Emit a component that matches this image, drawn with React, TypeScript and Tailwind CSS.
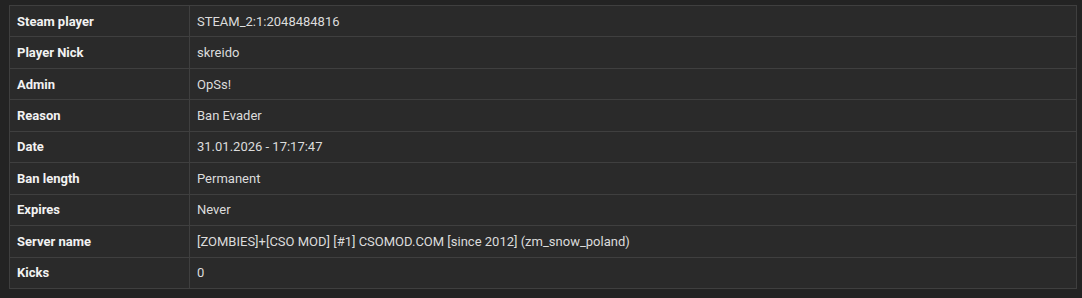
import React from 'react';

// Ban details table rows
const rows: { label: string; value: string }[] = [
  { label: 'Steam player', value: 'STEAM_2:1:2048484816' },
  { label: 'Player Nick', value: 'skreido' },
  { label: 'Admin', value: 'OpSs!' },
  { label: 'Reason', value: 'Ban Evader' },
  { label: 'Date', value: '31.01.2026 - 17:17:47' },
  { label: 'Ban length', value: 'Permanent' },
  { label: 'Expires', value: 'Never' },
  { label: 'Server name', value: '[ZOMBIES]+[CSO MOD] [#1] CSOMOD.COM [since 2012] (zm_snow_poland)' },
  { label: 'Kicks', value: '0' },
];

export default function App() {
  return (
    <div className="w-[1082px] h-[298px] bg-[#232323] pt-[5px] pl-[9px] font-['Roboto',_'Liberation_Sans',_sans-serif] text-[13px]">
      <table className="w-[1068px] border-collapse bg-[#2a2a2a] border border-[#3f3f3f]">
        <tbody>
          {rows.map((row) => (
            <tr key={row.label} className="h-[31.45px]">
              <td className="w-[180px] border border-[#3f3f3f] px-[7px] font-bold text-[#f2f2f2] leading-[19px]">
                {row.label}
              </td>
              <td className="border border-[#3f3f3f] px-[7px] text-[#dcdcdc] leading-[19px]">
                {row.value}
              </td>
            </tr>
          ))}
        </tbody>
      </table>
    </div>
  );
}
